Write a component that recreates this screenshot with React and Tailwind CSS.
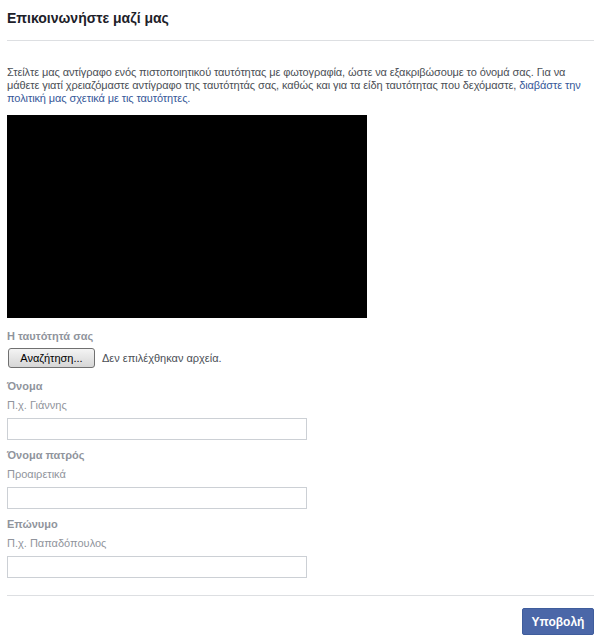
import React from "react";

const Field = ({ label, hint, className = "mt-[8px]" }) => (
  <div className={className}>
    <div className="text-[11px] font-bold leading-[14px] text-[#90949c]">{label}</div>
    <div className="mt-[5px] text-[11px] leading-[14px] text-[#90949c]">{hint}</div>
    <input
      type="text"
      className="mt-[6px] block h-[22px] w-[300px] border border-[#ccd0d5] bg-white outline-none"
    />
  </div>
);

const App = () => {
  return (
    <div className="min-h-[642px] w-[599px] bg-white pl-[7px] pr-[5px] pt-[9px] font-['Liberation_Sans',Arial,sans-serif] text-[#4b4f56]">
      <h2 className="text-[14px] font-bold leading-[18px] text-[#1d2129]">
        Επικοινωνήστε μαζί μας
      </h2>
      <div className="mt-[13px] h-px bg-[#dddfe2]" />

      {/* intro text */}
      <p className="mt-[25px] whitespace-nowrap text-[11px] leading-[13px] tracking-[-0.1px] text-[#4b4f56]">
        Στείλτε μας αντίγραφο ενός πιστοποιητικού ταυτότητας με φωτογραφία, ώστε να εξακριβώσουμε το όνομά σας. Για να
        <br />
        μάθετε γιατί χρειαζόμαστε αντίγραφο της ταυτότητάς σας, καθώς και για τα είδη ταυτότητας που δεχόμαστε,{" "}
        <a href="#" className="text-[#365899]">
          διαβάστε την
          <br />
          πολιτική μας σχετικά με τις ταυτότητες.
        </a>
      </p>

      <div className="mt-[10px] h-[203px] w-[360px] bg-black" />

      <div className="mt-[11px] text-[11px] font-bold leading-[14px] text-[#90949c]">Η ταυτότητά σας</div>
      <div className="mt-[5px] flex items-center gap-[7px]">
        <button className="ml-px h-[20px] w-[87px] rounded-[3px] border border-[#707070] bg-gradient-to-b from-[#f4f4f4] to-[#d6d6d6] text-[11px] text-black">
          Αναζήτηση...
        </button>
        <span className="text-[11px] text-[#4b4f56]">Δεν επιλέχθηκαν αρχεία.</span>
      </div>

      <Field label="Όνομα" hint="Π.χ. Γιάννης" className="mt-[11px]" />
      <Field label="Όνομα πατρός" hint="Προαιρετικά" />
      <Field label="Επώνυμο" hint="Π.χ. Παπαδόπουλος" />

      <div className="mt-[17px] h-px bg-[#dddfe2]" />
      <div className="mt-[12px] flex justify-end">
        <button className="h-[27px] w-[72px] rounded-[2px] border border-[#3f5d9c] bg-[#4b67a8] text-[12px] font-bold text-white">
          Υποβολή
        </button>
      </div>
    </div>
  );
};

export default App;
